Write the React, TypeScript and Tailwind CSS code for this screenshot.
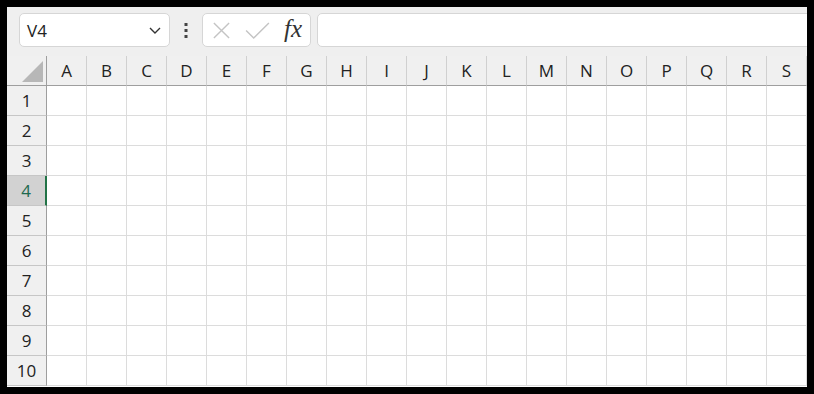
import React from "react";

const cols = "ABCDEFGHIJKLMNOPQRS".split("");
const rows = [1, 2, 3, 4, 5, 6, 7, 8, 9, 10];

export default function App() {
  return (
    <div className="w-[814px] h-[394px] bg-black p-[7px]" style={{ fontFamily: '"Open Sans", "Noto Sans", sans-serif' }}>
      <div className="w-[800px] h-[380px] bg-white overflow-hidden flex flex-col">
        {/* toolbar */}
        <div className="h-[49px] shrink-0 bg-[#efefef] flex items-start pt-[6px] pl-[12px] overflow-hidden">
          <div className="w-[151px] h-[34px] shrink-0 bg-white border border-[#d6d6d6] rounded-[5px] flex items-center justify-between pl-[7px] pr-[7px]">
            <span className="text-[17px] text-[#222] leading-none">V4</span>
            <svg width="14" height="14" viewBox="0 0 14 14" fill="none">
              <path d="M2 5 L7 10 L12 5" stroke="#333" strokeWidth="1.4" />
            </svg>
          </div>
          <div className="w-[32px] h-[34px] shrink-0 flex items-center justify-center">
            <svg width="4" height="16" viewBox="0 0 4 16">
              <rect x="0.5" y="1" width="3" height="3" fill="#444" />
              <rect x="0.5" y="7" width="3" height="3" fill="#444" />
              <rect x="0.5" y="13" width="3" height="3" fill="#444" />
            </svg>
          </div>
          <div className="w-[109px] h-[34px] shrink-0 bg-white border border-[#d6d6d6] rounded-[5px] flex items-center pl-[9px] gap-[14px]">
            <svg width="19" height="19" viewBox="0 0 20 20" fill="none">
              <path d="M2 2 L18 18 M18 2 L2 18" stroke="#c4c4c4" strokeWidth="1.5" />
            </svg>
            <svg width="25" height="19" viewBox="0 0 26 20" fill="none">
              <path d="M1 10 L9 18 L25 2" stroke="#c4c4c4" strokeWidth="1.5" />
            </svg>
            <span className="text-[25px] italic text-[#333] leading-none -mt-[3px]" style={{ fontFamily: '"Liberation Serif", "DejaVu Serif", serif' }}>
              fx
            </span>
          </div>
          <div className="ml-[6px] w-[500px] h-[34px] shrink-0 bg-white border border-[#d6d6d6] rounded-[5px]" />
        </div>
        {/* grid */}
        <div className="grid grid-cols-[40px_repeat(19,40px)] grid-rows-[30px_repeat(10,30px)]">
          <div className="bg-[#f0f0f0] border-r border-b border-[#9e9e9e] relative">
            <div className="absolute right-[3px] bottom-[3px] w-0 h-0 border-l-[21px] border-l-transparent border-b-[21px] border-b-[#b7b7b7]" />
          </div>
          {cols.map((c) => (
            <div key={c} className="bg-[#f0f0f0] border-r border-r-[#d0d0d0] border-b border-b-[#9e9e9e] flex items-center justify-center text-[17px] text-[#222]">
              {c}
            </div>
          ))}
          {rows.map((r) => (
            <React.Fragment key={r}>
              {r === 4 ? (
                <div className="bg-[#d2d2d2] border-r-2 border-r-[#217346] border-b border-b-[#c6c6c6] flex items-center justify-center text-[17px] text-[#1e6a4f]">
                  {r}
                </div>
              ) : (
                <div className="bg-[#f0f0f0] border-r border-r-[#9e9e9e] border-b border-b-[#c6c6c6] flex items-center justify-center text-[17px] text-[#222]">
                  {r}
                </div>
              )}
              {cols.map((c) => (
                <div key={c} className="border-r border-b border-[#dcdcdc] bg-white" />
              ))}
            </React.Fragment>
          ))}
        </div>
      </div>
    </div>
  );
}
